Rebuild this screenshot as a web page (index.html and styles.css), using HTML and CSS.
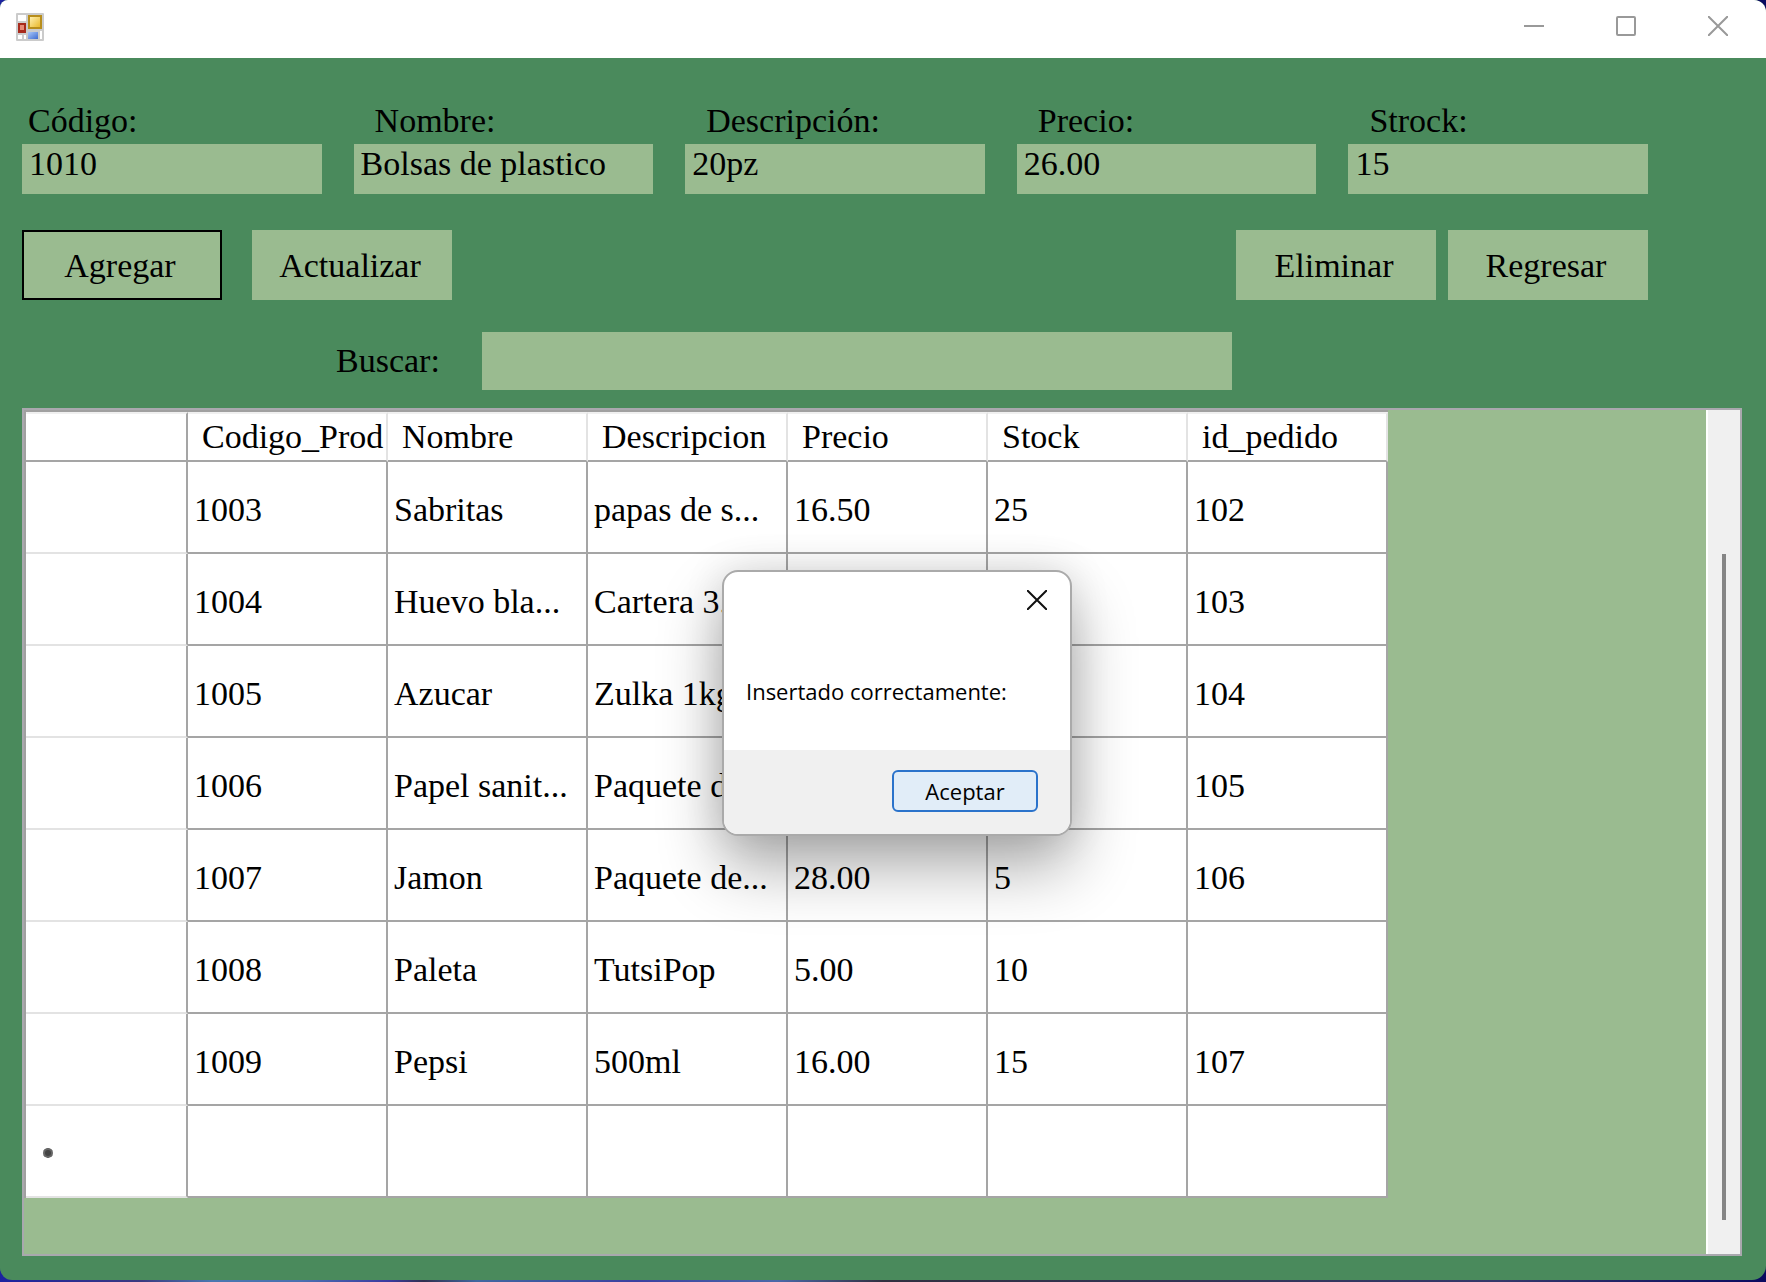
FILE: index.html
```html
<!DOCTYPE html>
<html lang="es">
<head>
<meta charset="utf-8">
<title>Productos</title>
<link rel="stylesheet" href="styles.css">
</head>
<body>
<div class="window">
  <header class="titlebar">
    <svg class="app-icon" viewBox="0 0 28 28" aria-hidden="true">
      <defs>
        <linearGradient id="gold" x1="0" y1="0" x2="1" y2="1"><stop offset="0" stop-color="#fff0b0"/><stop offset="1" stop-color="#e9b92c"/></linearGradient>
        <linearGradient id="blue" x1="0" y1="0" x2="1" y2="1"><stop offset="0" stop-color="#a9c8fa"/><stop offset="1" stop-color="#3f6bd0"/></linearGradient>
      </defs>
      <rect width="28" height="28" rx="1" fill="#cbcbcb"/>
      <rect x="2" y="2" width="8" height="6" fill="#fff"/>
      <rect x="2" y="10" width="8" height="10" fill="#a82a1c"/>
      <rect x="4" y="12" width="4" height="5" fill="#e58b78"/>
      <rect x="12" y="2" width="14" height="14" fill="#b88e1c"/>
      <rect x="14" y="4" width="10" height="10" fill="url(#gold)"/>
      <rect x="12" y="19" width="10" height="7" fill="url(#blue)"/>
      <rect x="24" y="18" width="2" height="8" fill="#fff"/>
      <rect x="2" y="22" width="4" height="4" fill="#fff"/>
      <rect x="8" y="22" width="2" height="4" fill="#fff"/>
    </svg>
    <div class="caption-buttons">
      <button class="caption-button" aria-label="Minimizar"><svg viewBox="0 0 20 20"><path d="M0 10H20"/></svg></button>
      <button class="caption-button" aria-label="Maximizar"><svg viewBox="0 0 20 20"><rect x="1" y="1" width="18" height="18" rx="1"/></svg></button>
      <button class="caption-button" aria-label="Cerrar"><svg viewBox="0 0 20 20"><path d="M0 0L20 20M20 0L0 20"/></svg></button>
    </div>
  </header>

  <main class="content">
    <form class="form">
      <div class="fields">
        <div class="field"><label for="codigo">Código:</label><input id="codigo" type="text" value="1010"></div>
        <div class="field"><label for="nombre">Nombre:</label><input id="nombre" type="text" value="Bolsas de plastico"></div>
        <div class="field"><label for="descripcion">Descripción:</label><input id="descripcion" type="text" value="20pz"></div>
        <div class="field"><label for="precio">Precio:</label><input id="precio" type="text" value="26.00"></div>
        <div class="field"><label for="stock">Strock:</label><input id="stock" type="text" value="15"></div>
      </div>
      <div class="actions">
        <div class="action-group wide">
          <button type="button" class="action default">Agregar</button>
          <button type="button" class="action">Actualizar</button>
        </div>
        <div class="action-group">
          <button type="button" class="action">Eliminar</button>
          <button type="button" class="action">Regresar</button>
        </div>
      </div>
      <div class="search">
        <label for="buscar">Buscar:</label>
        <input id="buscar" type="text">
      </div>
    </form>

    <section class="grid-panel">
      <div class="grid-view">
        <table class="grid">
          <colgroup><col class="row-col"><col><col><col><col><col><col></colgroup>
          <thead>
            <tr><td></td><th>Codigo_Prod</th><th>Nombre</th><th>Descripcion</th><th>Precio</th><th>Stock</th><th>id_pedido</th></tr>
          </thead>
          <tbody>
            <tr><td></td><td>1003</td><td>Sabritas</td><td>papas de s...</td><td>16.50</td><td>25</td><td>102</td></tr>
            <tr><td></td><td>1004</td><td>Huevo bla...</td><td>Cartera 3...</td><td></td><td></td><td>103</td></tr>
            <tr><td></td><td>1005</td><td>Azucar</td><td>Zulka 1kg</td><td></td><td></td><td>104</td></tr>
            <tr><td></td><td>1006</td><td>Papel sanit...</td><td>Paquete d...</td><td></td><td></td><td>105</td></tr>
            <tr><td></td><td>1007</td><td>Jamon</td><td>Paquete de...</td><td>28.00</td><td>5</td><td>106</td></tr>
            <tr><td></td><td>1008</td><td>Paleta</td><td>TutsiPop</td><td>5.00</td><td>10</td><td></td></tr>
            <tr><td></td><td>1009</td><td>Pepsi</td><td>500ml</td><td>16.00</td><td>15</td><td>107</td></tr>
            <tr><td><svg class="new-row" viewBox="0 0 12 12" aria-label="Nueva fila"><path d="M6 1V11M2 3L10 9M10 3L2 9"/><circle cx="6" cy="6" r="4"/></svg></td><td></td><td></td><td></td><td></td><td></td><td></td></tr>
          </tbody>
        </table>
      </div>
      <div class="scrollbar"><div class="thumb"></div></div>
    </section>
  </main>

  <dialog class="message" open>
    <div class="message-body">
      <button class="message-close" aria-label="Cerrar"><svg viewBox="0 0 20 20"><path d="M0 0L20 20M20 0L0 20"/></svg></button>
      <p>Insertado correctamente:</p>
    </div>
    <div class="message-footer"><button class="accept">Aceptar</button></div>
  </dialog>
</div>
</body>
</html>
```
FILE: styles.css
```css
* {
  box-sizing: border-box;
}

body {
  margin: 0;
  padding-bottom: 2px;
  min-height: 100vh;
  display: flex;
  background: linear-gradient(90deg, #1c22a0, #3a3a80 8%, #4a78b0 12%, #4a70b0 17%, #3a3aa0 22%, #303050 24%, #4068a0 27%, #3a40a0 36%, #4a68a8 44%, #303040 50%, #34386a 85%, #0a0a60);
  font-family: "Liberation Serif", serif;
  font-size: 34px;
  line-height: 38px;
  color: #000;
}

button,
input {
  font: inherit;
  color: inherit;
  border: 0;
  border-radius: 0;
  margin: 0;
  padding: 0;
}

.window {
  position: relative;
  flex: 1;
  display: flex;
  flex-direction: column;
  overflow: hidden;
  border-radius: 8px 12px 14px 12px;
  background: #4a8a5c;
}

.titlebar {
  height: 58px;
  display: flex;
  justify-content: space-between;
  padding: 0 2px 0 16px;
  background: #fff;
}

.app-icon {
  width: 28px;
  height: 28px;
  margin-top: 13px;
}

.caption-buttons {
  display: flex;
}

.caption-button {
  width: 92px;
  height: 52px;
  display: grid;
  place-items: center;
  background: none;
}

.caption-button svg,
.message-close svg {
  width: 20px;
  height: 20px;
  fill: none;
  stroke: #999;
  stroke-width: 2;
}

.content {
  flex: 1;
  display: flex;
  flex-direction: column;
  padding: 44px 24px 24px 22px;
}

.form {
  margin-right: 94px;
}

.fields {
  display: flex;
  gap: 32px;
}

.field {
  flex: 1;
  min-width: 0;
  display: flex;
  flex-direction: column;
}

.field label {
  padding: 0 0 4px 21px;
}

.field:first-child label {
  padding-left: 6px;
}

.field input {
  width: 100%;
  height: 50px;
  padding: 0 7px 10px;
  background: #9abb90;
}

.actions {
  display: flex;
  justify-content: space-between;
  margin-top: 36px;
}

.action-group {
  display: flex;
  gap: 12px;
}

.action-group.wide {
  gap: 30px;
}

.action {
  width: 200px;
  height: 70px;
  padding: 2px 4px 0 0;
  background: #9abb90;
}

.action.default {
  border: 2px solid #000;
}

.search {
  display: flex;
  align-items: center;
  gap: 42px;
  margin: 32px 416px 18px 314px;
}

.search input {
  flex: 1;
  min-width: 0;
  height: 58px;
  padding: 0 6px;
  background: #9abb90;
}

.grid-panel {
  flex: 1;
  display: flex;
  border: 2px solid #a9a8ae;
  background: #9abb90;
}

.grid-view {
  flex: 1;
  min-width: 0;
  overflow: hidden;
}

.grid {
  width: 1364px;
  table-layout: fixed;
  border-collapse: separate;
  border-spacing: 0;
  border: solid #a0a0a0;
  border-width: 2px 0 0 2px;
  background: #fff;
}

.grid col {
  width: 200px;
}

.grid .row-col {
  width: 162px;
}

.grid th,
.grid td {
  height: 92px;
  padding: 6px 0 0 6px;
  border: solid #a5a5a5;
  border-width: 0 2px 2px 0;
  font-weight: normal;
  text-align: left;
  white-space: nowrap;
  overflow: hidden;
}

.grid thead th,
.grid thead td {
  height: 50px;
  padding: 0 0 0 14px;
  border-top: 2px solid #f0f0f0;
}

.grid thead th {
  border-right-color: #e3e3e3;
}

.grid tbody td:first-child {
  padding: 4px 0 0 16px;
  border-bottom-color: #e3e3e3;
}

.new-row {
  display: block;
  width: 12px;
  height: 12px;
  fill: #444;
  stroke: #666;
  stroke-width: 2;
}

.scrollbar {
  width: 34px;
  display: flex;
  justify-content: center;
  padding: 144px 0 34px;
  border-left: 2px solid #fff;
  background: #f0f0f0;
}

.thumb {
  width: 4px;
  background: #858585;
}

.message {
  position: absolute;
  left: 722px;
  top: 570px;
  width: 350px;
  margin: 0;
  padding: 0;
  overflow: hidden;
  border: 2px solid #aaa;
  border-radius: 16px;
  background: #fff;
  box-shadow: 0 32px 64px rgba(0, 0, 0, 0.32), 0 0 40px rgba(0, 0, 0, 0.12);
  font-family: "Open Sans", sans-serif;
  font-size: 22px;
  line-height: 30px;
  color: #000;
}

.message-body {
  height: 178px;
  display: flex;
  flex-direction: column;
}

.message-close {
  align-self: flex-end;
  width: 66px;
  height: 56px;
  display: grid;
  place-items: center;
  background: none;
}

.message-close svg {
  stroke: #111;
}

.message-body p {
  margin: 48px 0 0 22px;
  white-space: nowrap;
}

.message-footer {
  display: flex;
  justify-content: flex-end;
  padding: 20px 32px 22px;
  background: #f0f0f0;
}

.accept {
  width: 146px;
  height: 42px;
  border: 2px solid #2b73cb;
  border-radius: 6px;
  background: #e1edf8;
}
```
